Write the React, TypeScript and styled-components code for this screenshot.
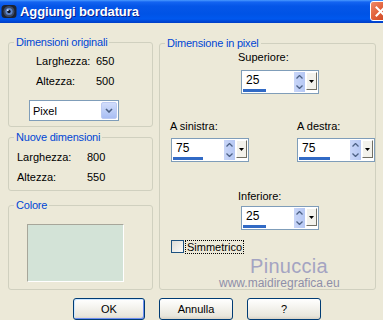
import React from "react";
import styled, { createGlobalStyle } from "styled-components";

const GlobalStyle = createGlobalStyle`
  html, body {
    margin: 0;
    padding: 0;
    background: #ece9d8;
  }
  body {
    width: 383px;
    height: 320px;
    overflow: hidden;
    font-family: "Liberation Sans", Arial, sans-serif;
    font-size: 11px;
    color: #000;
  }
`;

const Dialog = styled.div`
  position: relative;
  width: 383px;
  height: 320px;
  overflow: hidden;
  background: #ece9d8;
  display: flex;
  flex-direction: column;
`;

const TitleBar = styled.div`
  flex: none;
  height: 23px;
  display: flex;
  align-items: center;
  padding-left: 1px;
  overflow: hidden;
  background: linear-gradient(
    #4a9aff 0,
    #1464f2 2px,
    #0556e8 6px,
    #0053e6 14px,
    #0058ee 19px,
    #0049d9 21px,
    #003dc6 23px
  );
`;

const Title = styled.span`
  margin-left: 3px;
  margin-top: -1px;
  color: #fff;
  font-family: "Liberation Sans", Arial, sans-serif;
  font-weight: bold;
  font-size: 13px;
  letter-spacing: -0.1px;
  text-shadow: 1px 1px 0 #0a1f8f;
`;

const CloseButton = styled.div`
  flex: none;
  align-self: flex-start;
  margin: 1px -8px 0 auto;
  width: 21px;
  height: 20px;
  box-sizing: border-box;
  border: 1px solid #fff;
  border-radius: 3px;
  background: linear-gradient(135deg, #ef8a68 0%, #e2623c 45%, #c8401c 100%);
  display: flex;
  align-items: center;
  justify-content: center;
`;

const Content = styled.div`
  flex: none;
  display: flex;
  align-items: stretch;
  gap: 6px;
  padding: 0 7px 0 8px;
`;

const LeftColumn = styled.div`
  width: 145px;
  display: flex;
  flex-direction: column;
  margin-top: 13px;
`;

const Group = styled.fieldset<{ $mt: number; $pt: number; $pb: number }>`
  margin: ${(p) => p.$mt}px 0 0;
  padding: ${(p) => p.$pt}px 0 ${(p) => p.$pb}px;
  border: 1px solid #d0d0bf;
  border-radius: 3px;
  min-width: 0;
  box-sizing: border-box;
`;

const RightGroup = styled(Group)`
  width: 217px;
`;

const Legend = styled.legend`
  margin-left: 5px;
  padding: 0 2px;
  color: #0046d5;
  font-size: 11px;
  line-height: 13px;
  letter-spacing: -0.2px;
`;

const InfoRow = styled.div<{ $indent: number; $labelWidth: number }>`
  height: 20px;
  display: flex;
  align-items: center;
  padding-left: ${(p) => p.$indent}px;
  & > span:first-child {
    width: ${(p) => p.$labelWidth}px;
  }
`;

const Select = styled.div`
  margin: 9px 0 0 20px;
  width: 90px;
  height: 21px;
  box-sizing: border-box;
  border: 1px solid #7f9db9;
  background: #fff;
  display: flex;
  align-items: center;
`;

const SelectText = styled.span`
  flex: 1;
  padding-left: 3px;
`;

const SelectButton = styled.div`
  width: 16px;
  height: 17px;
  margin-right: 1px;
  box-sizing: border-box;
  border: 1px solid #bccaf2;
  border-radius: 2px;
  background: linear-gradient(#d2ddfb, #b9cbf6 60%, #a9bef4);
  display: flex;
  align-items: center;
  justify-content: center;
`;

const Swatch = styled.div`
  margin: 6px 0 0 18px;
  width: 97px;
  height: 58px;
  box-sizing: border-box;
  background: #d3e3d7;
  border: 1px solid;
  border-color: #a7a69a #fff #fff #a7a69a;
`;

const FieldRow = styled.div<{ $mt: number; $pl: number }>`
  display: flex;
  justify-content: space-between;
  margin-top: ${(p) => p.$mt}px;
  padding-left: ${(p) => p.$pl}px;
`;

const Field = styled.div`
  display: flex;
  flex-direction: column;
`;

const FieldLabel = styled.span<{ $shift: number }>`
  line-height: 13px;
  margin-left: ${(p) => p.$shift}px;
`;

const SpinBox = styled.div<{ $mt: number }>`
  margin-top: ${(p) => p.$mt}px;
  width: 78px;
  height: 24px;
  box-sizing: border-box;
  border: 1px solid #7f9db9;
  background: #fff;
  padding: 1px;
  display: flex;
`;

const ValueArea = styled.div`
  flex: 1;
  display: flex;
  flex-direction: column;
`;

const Value = styled.span`
  margin-top: 2px;
  padding-left: 3px;
  font-size: 12px;
  line-height: 13px;
`;

const Bar = styled.div`
  margin-top: auto;
  height: 3px;
  background: #316ac5;
`;

const SpinArrows = styled.div`
  width: 11px;
  display: flex;
  flex-direction: column;
  background: linear-gradient(90deg, #c9d6f8, #b6c8f4);
  border-left: 1px solid #fff;
`;

const ArrowHalf = styled.div`
  flex: 1;
  display: flex;
  align-items: center;
  justify-content: center;
`;

const DropButton = styled.div`
  width: 11px;
  height: 18px;
  margin-left: 1px;
  box-sizing: border-box;
  background: #f3f2ec;
  border: 1px solid;
  border-color: #fff #716f64 #716f64 #fff;
  display: flex;
  align-items: center;
  justify-content: center;
`;

const CheckRow = styled.label`
  margin: 10px 0 0 11px;
  display: flex;
  align-items: center;
  gap: 2px;
`;

const CheckBox = styled.span`
  width: 13px;
  height: 13px;
  box-sizing: border-box;
  border: 1px solid #1c5180;
  background: linear-gradient(135deg, #dcdcd7, #fbfbf9);
`;

const CheckText = styled.span`
  line-height: 12px;
  outline: 1px dotted #000;
  outline-offset: 0;
  padding: 0 1px;
`;

const Watermark = styled.div`
  position: absolute;
  left: 219px;
  top: 256px;
  display: flex;
  flex-direction: column;
  pointer-events: none;
`;

const WatermarkName = styled.span`
  margin-left: 31px;
  font-size: 20px;
  line-height: 20px;
  color: #a4a4c2;
  letter-spacing: 0.3px;
`;

const WatermarkUrl = styled.span`
  margin-top: 1px;
  font-size: 12px;
  line-height: 12px;
  color: #8f8fa9;
`;

const ButtonRow = styled.div`
  display: flex;
  gap: 14px;
  margin-top: 8px;
  padding-left: 73px;
`;

const Button = styled.button<{ $width: number; $default?: boolean }>`
  width: ${(p) => p.$width}px;
  height: 22px;
  padding: 0;
  border: 1px solid #003c74;
  border-radius: 3px;
  font-family: "Liberation Sans", Arial, sans-serif;
  font-size: 11px;
  color: #000;
  background: linear-gradient(#ffffff, #f5f4ef 40%, #e8e6dc 85%, #d8d2c6);
  box-shadow: ${(p) =>
    p.$default
      ? "inset 1px 1px 0 #cee7ff, inset -1px -1px 0 #6e8ef0"
      : "none"};
`;

const ChevronDown = ({ size = 8 }: { size?: number }) => (
  <svg width={size} height={size * 0.625} viewBox="0 0 8 5">
    <path d="M1 1l3 3 3-3" fill="none" stroke="#4d6185" strokeWidth="1.6" />
  </svg>
);

const SmallChevron = ({ up }: { up?: boolean }) => (
  <svg width="7" height="4" viewBox="0 0 7 4">
    <path
      d={up ? "M0.5 3.5L3.5 0.5 6.5 3.5" : "M0.5 0.5L3.5 3.5 6.5 0.5"}
      fill="none"
      stroke="#4d6185"
      strokeWidth="1.3"
    />
  </svg>
);

interface SpinnerProps {
  value: string;
  bar: number;
  mt: number;
}

function Spinner({ value, bar, mt }: SpinnerProps) {
  return (
    <SpinBox $mt={mt}>
      <ValueArea>
        <Value>{value}</Value>
        <Bar style={{ width: bar }} />
      </ValueArea>
      <SpinArrows>
        <ArrowHalf>
          <SmallChevron up />
        </ArrowHalf>
        <ArrowHalf>
          <SmallChevron />
        </ArrowHalf>
      </SpinArrows>
      <DropButton>
        <svg width="5" height="3" viewBox="0 0 5 3">
          <path d="M0 0h5L2.5 3z" fill="#000" />
        </svg>
      </DropButton>
    </SpinBox>
  );
}

function AppIcon() {
  return (
    <svg width="16" height="15" viewBox="0 0 16 15">
      <rect x="0.5" y="1" width="15" height="13" rx="3.5" fill="#1d2330" />
      <circle cx="8" cy="7.5" r="5.5" fill="#3b4a66" />
      <circle cx="8" cy="7.5" r="3.6" fill="#5f86c9" />
      <circle cx="8" cy="7.5" r="1.7" fill="#0c1424" />
      <circle cx="6.8" cy="6.2" r="0.9" fill="#cfe0ff" />
    </svg>
  );
}

export default function App() {
  return (
    <>
      <GlobalStyle />
      <Dialog>
        <TitleBar>
          <AppIcon />
          <Title>Aggiungi bordatura</Title>
          <CloseButton>
            <svg width="11" height="11" viewBox="0 0 11 11">
              <path
                d="M1.5 1.5l8 8M9.5 1.5l-8 8"
                stroke="#fff"
                strokeWidth="2"
                strokeLinecap="square"
              />
            </svg>
          </CloseButton>
        </TitleBar>

        <Content>
          <LeftColumn>
            <Group $mt={0} $pt={2} $pb={5}>
              <Legend>Dimensioni originali</Legend>
              <InfoRow $indent={27} $labelWidth={60}>
                <span>Larghezza:</span>
                <span>650</span>
              </InfoRow>
              <InfoRow $indent={27} $labelWidth={60}>
                <span>Altezza:</span>
                <span>500</span>
              </InfoRow>
              <Select>
                <SelectText>Pixel</SelectText>
                <SelectButton>
                  <ChevronDown />
                </SelectButton>
              </Select>
            </Group>

            <Group $mt={4} $pt={3} $pb={3}>
              <Legend>Nuove dimensioni</Legend>
              <InfoRow $indent={8} $labelWidth={70}>
                <span>Larghezza:</span>
                <span>800</span>
              </InfoRow>
              <InfoRow $indent={8} $labelWidth={70}>
                <span>Altezza:</span>
                <span>550</span>
              </InfoRow>
            </Group>

            <Group $mt={8} $pt={6} $pb={7}>
              <Legend>Colore</Legend>
              <Swatch />
            </Group>
          </LeftColumn>

          <RightGroup $mt={14} $pt={1} $pb={0}>
            <Legend>Dimensione in pixel</Legend>
            <FieldRow $mt={0} $pl={81}>
              <Field>
                <FieldLabel $shift={-3}>Superiore:</FieldLabel>
                <Spinner value="25" bar={23} mt={6} />
              </Field>
            </FieldRow>
            <FieldRow $mt={26} $pl={11}>
              <Field>
                <FieldLabel $shift={-1}>A sinistra:</FieldLabel>
                <Spinner value="75" bar={30} mt={5} />
              </Field>
              <Field>
                <FieldLabel $shift={0}>A destra:</FieldLabel>
                <Spinner value="75" bar={31} mt={5} />
              </Field>
            </FieldRow>
            <FieldRow $mt={28} $pl={81}>
              <Field>
                <FieldLabel $shift={-3}>Inferiore:</FieldLabel>
                <Spinner value="25" bar={23} mt={3} />
              </Field>
            </FieldRow>
            <CheckRow>
              <CheckBox />
              <CheckText>Simmetrico</CheckText>
            </CheckRow>
          </RightGroup>
        </Content>

        <ButtonRow>
          <Button $width={72} $default>
            OK
          </Button>
          <Button $width={74}>Annulla</Button>
          <Button $width={74}>?</Button>
        </ButtonRow>

        <Watermark>
          <WatermarkName>Pinuccia</WatermarkName>
          <WatermarkUrl>www.maidiregrafica.eu</WatermarkUrl>
        </Watermark>
      </Dialog>
    </>
  );
}
